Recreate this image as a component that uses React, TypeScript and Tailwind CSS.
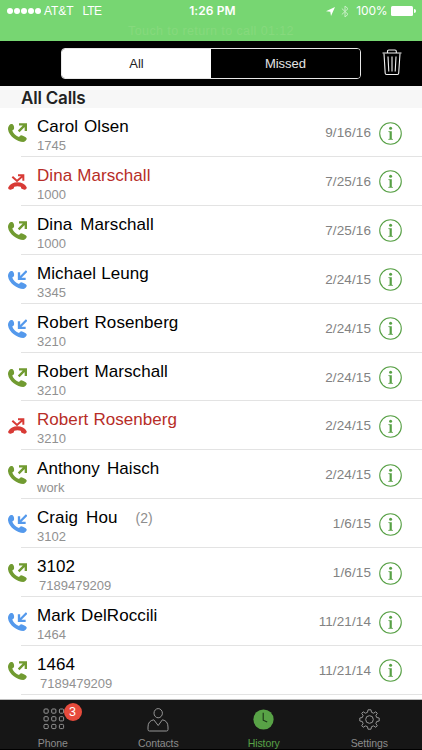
type CallKind = "out" | "in" | "missed";

interface Call {
  kind: CallKind;
  first: string;
  last?: string;
  gap?: string;
  sub: string;
  subGap?: string;
  count?: number;
  date: string;
}

const calls: Call[] = [
  { kind: "out", first: "Carol", last: "Olsen", gap: "ml-[6px]", sub: "1745", date: "9/16/16" },
  { kind: "missed", first: "Dina", last: "Marschall", gap: "ml-[5px]", sub: "1000", date: "7/25/16" },
  { kind: "out", first: "Dina", last: "Marschall", gap: "ml-[8px]", sub: "1000", date: "7/25/16" },
  { kind: "in", first: "Michael", last: "Leung", gap: "ml-[5px]", sub: "3345", date: "2/24/15" },
  { kind: "in", first: "Robert", last: "Rosenberg", gap: "ml-[6px]", sub: "3210", date: "2/24/15" },
  { kind: "out", first: "Robert", last: "Marschall", gap: "ml-[6px]", sub: "3210", date: "2/24/15" },
  { kind: "missed", first: "Robert", last: "Rosenberg", gap: "ml-[5px]", sub: "3210", date: "2/24/15" },
  { kind: "out", first: "Anthony", last: "Haisch", gap: "ml-[7px]", sub: "work", date: "2/24/15" },
  { kind: "in", first: "Craig", last: "Hou", gap: "ml-[8px]", sub: "3102", count: 2, date: "1/6/15" },
  { kind: "out", first: "3102", sub: "7189479209", subGap: "ml-[2px]", date: "1/6/15" },
  { kind: "in", first: "Mark", last: "DelRoccili", gap: "ml-[6px]", sub: "1464", date: "11/21/14" },
  { kind: "out", first: "1464", sub: "7189479209", subGap: "ml-[3px]", date: "11/21/14" },
];

const HANDSET =
  "M3 8C5 4 10 2 14 4C18 8 19 14 18 18C17 21 13 21 13 23C16 31 24 39 33 42C35 41 36 37 40 37C46 38 53 42 56 46C57 51 52 56 46 57C28 57 3 41 0 19C0 14 1 11 3 8Z";

function CallIcon({ kind }: { kind: CallKind }) {
  if (kind === "missed") {
    return (
      <svg className="h-[19px] w-[19px]" viewBox="0 0 57 57">
        <path
          fill="#d83a35"
          d="M1 46C6 36 17 31 28 31C40 31 51 36 56 46C57 49 53 54 49 53L41 50C38 48 40 46 38 44C32 42 25 42 19 44C17 46 19 48 16 50L8 53C4 54 -1 50 1 46Z"
        />
        <path fill="none" stroke="#d83a35" strokeWidth="6" d="M13 14L27 27L45 11M30 10H46V26" />
      </svg>
    );
  }
  if (kind === "in") {
    return (
      <svg className="h-[19px] w-[19px]" viewBox="0 0 57 57">
        <path fill="#5499ec" d={HANDSET} />
        <path fill="none" stroke="#5499ec" strokeWidth="7" d="M56 3L35 24M33 7V26.5H53" />
      </svg>
    );
  }
  return (
    <svg className="h-[19px] w-[19px]" viewBox="0 0 57 57">
      <path fill="#719b31" d={HANDSET} />
      <path fill="none" stroke="#719b31" strokeWidth="7" d="M32 25L52 5M33 4H53.5V24" />
    </svg>
  );
}

function InfoIcon() {
  return (
    <svg className="h-[23px] w-[23px]" viewBox="0 0 23 23">
      <circle cx="11.5" cy="11.5" r="10.8" fill="none" stroke="#57a045" strokeWidth="1.1" />
      <circle cx="11.6" cy="6.3" r="1.5" fill="#57a045" />
      <path fill="#57a045" d="M9.4 9.2H12.8V16.7L13.9 17V17.8H9.3V17L10.6 16.7V10.2L9.4 10Z" />
    </svg>
  );
}

function CallRow({ call }: { call: Call }) {
  const missed = call.kind === "missed";
  return (
    <li className="relative flex h-[48.92px] pl-2 after:absolute after:right-0 after:bottom-0 after:left-[21px] after:h-px after:bg-[#e3e3e3]">
      <div className="mt-[15px] w-[29px] shrink-0">
        <CallIcon kind={call.kind} />
      </div>
      <div className="min-w-0 flex-1 pt-[9px]">
        <div
          className={
            missed
              ? "flex h-5 items-center text-[17px] leading-5 tracking-[0.06px] text-[#b72d27]"
              : "flex h-5 items-center text-[17px] leading-5 tracking-[0.08px] text-black"
          }
        >
          <span>{call.first}</span>
          {call.last && <span className={call.gap}>{call.last}</span>}
          {call.count && <span className="ml-[18px] text-[14px] text-[#8e8e8e]">({call.count})</span>}
        </div>
        <div className="mt-px h-4 text-[13px] leading-4 text-[#919191]">
          <span className={call.subGap}>{call.sub}</span>
        </div>
      </div>
      <div className="mt-[17px] mr-2 text-[13.5px] leading-4 tracking-[0.1px] text-[#828282]">{call.date}</div>
      <div className="mt-[13.5px] mr-5 shrink-0">
        <InfoIcon />
      </div>
    </li>
  );
}

function StatusBar() {
  return (
    <header className="h-[41px] bg-[#77d672] text-white">
      <div className="grid h-[22px] grid-cols-3 items-center pr-[6px] pl-[7px] text-[12px]">
        <div className="flex items-center">
          <div className="flex gap-[1px]">
            {[0, 1, 2, 3, 4].map((i) => (
              <span key={i} className="h-[6px] w-[6px] rounded-full bg-white" />
            ))}
          </div>
          <span className="ml-[3px] tracking-[-0.1px]">AT&amp;T</span>
          <span className="ml-[9px] tracking-[-0.8px]">LTE</span>
        </div>
        <div className="pl-[2px] text-center font-['Inter'] text-[12px] font-semibold tracking-[0.1px]">1:26 PM</div>
        <div className="flex items-center justify-end">
          <svg className="h-[9px] w-[9px]" viewBox="0 0 9 9">
            <path fill="#fff" d="M9 0L5 9L4.3 4.8L0 4.2Z" />
          </svg>
          <svg className="ml-[6px] h-[13px] w-[8px] opacity-60" viewBox="0 0 8 13">
            <path fill="none" stroke="#fff" strokeWidth="1" d="M0.8 3.5L7 9.3L4 12V1L7 3.7L0.8 9.5" />
          </svg>
          <span className="ml-[7px] font-['Inter'] text-[12px] tracking-[-0.15px]">100%</span>
          <span className="ml-[4px] h-[10px] w-[22px] rounded-[1.5px] bg-white" />
          <span className="ml-[1px] h-[4px] w-[1.5px] rounded-r-full bg-white" />
        </div>
      </div>
      <div className="pt-px text-center text-[12.5px] leading-4 tracking-[0.4px] text-[#86d97d]">
        Touch to return to call 01:12
      </div>
    </header>
  );
}

function FilterBar() {
  return (
    <div className="flex h-[45px] items-start bg-black">
      <div className="mt-[7px] ml-[61px] flex h-[31px] w-[300px] overflow-hidden rounded-[4px] border border-[#e8e8e8] text-[13px]">
        <div className="flex flex-1 items-center justify-center bg-white text-[#222]">All</div>
        <div className="flex flex-1 items-center justify-center bg-black text-[#e4e4e4]">Missed</div>
      </div>
      <svg className="mt-[8px] ml-[21px] h-[27px] w-[20px]" viewBox="0 0 20 27" fill="none" stroke="#f2f2f2" strokeWidth="1.1">
        <path d="M0.5 4H19.5M5.5 4V2.2Q5.5 1 6.8 1H13Q14.3 1 14.3 2.2V4" />
        <path d="M2 4.5L3.2 24.3Q3.3 25.5 4.5 25.5H15.4Q16.6 25.5 16.7 24.3L18 4.5" />
        <path d="M6 7.5L6.8 22.5M10 7.5V22.5M14 7.5L13.2 22.5" />
      </svg>
    </div>
  );
}

function KeypadIcon() {
  return (
    <svg className="h-[22px] w-[22px]" viewBox="0 0 22 22" fill="none" stroke="#969696" strokeWidth="1">
      {[1, 8.7, 16.4].map((y) =>
        [1, 8.7, 16.4].map((x) => <rect key={`${x}-${y}`} x={x} y={y} width="4.2" height="4.2" rx="1" />),
      )}
    </svg>
  );
}

function ContactIcon() {
  return (
    <svg className="h-6 w-[22px]" viewBox="0 0 22 24" fill="none" stroke="#969696" strokeWidth="1">
      <ellipse cx="11.2" cy="5.2" rx="4.2" ry="4.6" />
      <path d="M6.8 11.8Q1 12.8 1 19V21.5Q1 23 2.5 23H19.5Q21 23 21 21.5V19Q21 12.8 15.4 11.8L11.2 17.5Z" />
    </svg>
  );
}

function ClockIcon() {
  return (
    <svg className="h-[21px] w-[21px]" viewBox="0 0 21 21">
      <circle cx="10.5" cy="10.5" r="10.1" fill="#58a246" />
      <path fill="none" stroke="#1b3517" strokeWidth="1.1" d="M10.2 3.8V11.2L14.2 13" />
    </svg>
  );
}

function GearIcon() {
  return (
    <svg className="h-[21px] w-[21px]" viewBox="0 0 21 21" fill="none" stroke="#969696" strokeWidth="1" strokeLinejoin="round">
      <circle cx="10.5" cy="10.5" r="3.8" />
      <path d="M9 0.8H12L12.5 3.3L14.6 4.2L16.8 2.8L18.3 4.3L16.9 6.4L17.7 8.5L20.2 9V12L17.7 12.5L16.9 14.6L18.3 16.8L16.8 18.3L14.6 16.9L12.5 17.7L12 20.2H9L8.5 17.7L6.4 16.9L4.2 18.3L2.7 16.8L4.1 14.6L3.3 12.5L0.8 12V9L3.3 8.5L4.1 6.4L2.7 4.3L4.2 2.8L6.4 4.2L8.5 3.3Z" />
    </svg>
  );
}

function TabBar() {
  return (
    <nav className="grid h-[50px] grid-cols-4 border-b border-black bg-[#161616] text-[10.5px] text-[#8c8c8c]">
      <div className="relative flex flex-col items-center">
        <div className="flex h-[37px] items-center pl-[2px]">
          <KeypadIcon />
        </div>
        <span className="leading-3 tracking-[-0.1px]">Phone</span>
        <span className="absolute top-[3px] left-[63.5px] flex h-[18px] w-[18px] items-center justify-center rounded-full bg-[#e64b3c] text-[12.5px] text-white">
          3
        </span>
      </div>
      <div className="flex flex-col items-center">
        <div className="flex h-[37px] items-center pt-[2px]">
          <ContactIcon />
        </div>
        <span className="leading-3 tracking-[-0.1px]">Contacts</span>
      </div>
      <div className="flex flex-col items-center text-[#58a246]">
        <div className="flex h-[37px] items-center pt-px">
          <ClockIcon />
        </div>
        <span className="leading-3 tracking-[-0.1px]">History</span>
      </div>
      <div className="flex flex-col items-center">
        <div className="flex h-[37px] items-center pt-px">
          <GearIcon />
        </div>
        <span className="leading-3 tracking-[-0.1px]">Settings</span>
      </div>
    </nav>
  );
}

export default function App() {
  return (
    <div className="flex h-[750px] w-[422px] flex-col overflow-hidden bg-white font-['Liberation_Sans',Arial,sans-serif]">
      <StatusBar />
      <FilterBar />
      <h2 className="h-[22px] bg-[#f7f7f7] pl-[21px] font-['Inter'] text-[17px] leading-[24px] font-semibold tracking-[-0.2px] text-[#222]">
        All Calls
      </h2>
      <main className="min-h-0 flex-1 overflow-hidden border-b border-[#bdbdbd]">
        <ul>
          {calls.map((call, i) => (
            <CallRow key={i} call={call} />
          ))}
        </ul>
      </main>
      <TabBar />
    </div>
  );
}
